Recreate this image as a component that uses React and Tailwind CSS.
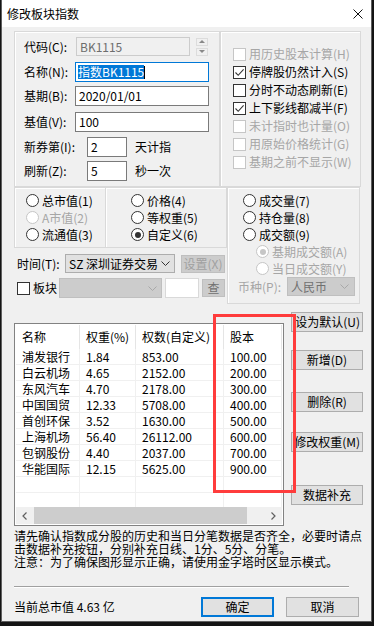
import React from "react";

const rows = [
  ["浦发银行", "1.84", "853.00", "100.00"],
  ["白云机场", "4.65", "2152.00", "200.00"],
  ["东风汽车", "4.70", "2178.00", "300.00"],
  ["中国国贸", "12.33", "5708.00", "400.00"],
  ["首创环保", "3.52", "1630.00", "500.00"],
  ["上海机场", "56.40", "26112.00", "600.00"],
  ["包钢股份", "4.40", "2037.00", "700.00"],
  ["华能国际", "12.15", "5625.00", "900.00"],
  ["", "", "", ""],
  ["", "", "", ""],
];

const colW = ["w-[64px]", "w-[56px]", "w-[88px]", "w-[58px]"];

const Chevron = ({ color = "#333" }) => (
  <svg width="9" height="5" viewBox="0 0 9 5">
    <path d="M0.5 0.5 L4.5 4.5 L8.5 0.5" fill="none" stroke={color} strokeWidth="1" />
  </svg>
);

const Check = ({ checked, disabled, label }) => (
  <div className="flex items-center h-[18px]">
    <span
      className={`w-[13px] h-[13px] border bg-white flex items-center justify-center ${
        disabled ? "border-[#c6c6c6]" : "border-[#333333]"
      }`}
    >
      {checked && (
        <svg width="11" height="11" viewBox="0 0 11 11">
          <path d="M1.5 5.5 L4.2 8.3 L9.6 2.4" fill="none" stroke="#333" strokeWidth="1.1" />
        </svg>
      )}
    </span>
    <span className={`ml-[3px] whitespace-nowrap ${disabled ? "text-[#a6a6a6]" : "text-black"}`}>{label}</span>
  </div>
);

const Radio = ({ on, disabled, label }) => (
  <div className="flex items-center h-[17px]">
    <span
      className={`w-[13px] h-[13px] rounded-full border bg-white flex items-center justify-center ${
        disabled ? "border-[#c6c6c6]" : "border-[#333333]"
      }`}
    >
      {on && <span className={`w-[6px] h-[6px] rounded-full ${disabled ? "bg-[#c6c6c6]" : "bg-[#333333]"}`} />}
    </span>
    <span className={`ml-[3px] whitespace-nowrap ${disabled ? "text-[#a6a6a6]" : "text-black"}`}>{label}</span>
  </div>
);

const Btn = ({ children, className = "" }) => (
  <div
    className={`h-[20px] border border-[#adadad] bg-[#e1e1e1] flex items-center justify-center whitespace-nowrap overflow-hidden ${className}`}
  >
    {children}
  </div>
);

export default function App() {
  return (
    <div className="relative w-[374px] h-[626px] bg-[#141414] overflow-hidden text-[12px] leading-[14px] text-black font-['Noto_Sans_CJK_SC',sans-serif]">
      <div className="ml-[1px] w-[371px] h-[622px] bg-[#f0f0f0] border-l border-r border-b border-[#5f5f5f] flex flex-col">
        {/* title bar */}
        <div className="h-[27px] bg-white flex items-center pl-[5px]">
          <span className="text-[12px]">修改板块指数</span>
          <svg className="ml-auto mr-[8px]" width="10" height="10" viewBox="0 0 10 10">
            <path d="M0.5 0.5 L9.5 9.5 M9.5 0.5 L0.5 9.5" stroke="#111" strokeWidth="1" />
          </svg>
        </div>

        {/* top panels */}
        <div className="mt-[4px] ml-[12px] flex h-[156px]">
          <div className="w-[206px] h-full border border-[#d9d9d9] shadow-[inset_1px_1px_0_#ffffff] pt-[5px] pl-[9px]">
            <div className="flex items-center h-[19px]">
              <span className="w-[52px]">代码(C):</span>
              <div className="w-[114px] h-[19px] border border-[#cccccc] bg-[#f0f0f0] text-[#6d6d6d] pl-[3px] flex items-center">
                BK1115
              </div>
              <div className="ml-[6px] flex flex-col gap-[2px]">
                <div className="w-[12px] h-[8px] border border-[#dcdcdc] bg-[#f0f0f0] flex items-center justify-center">
                  <svg width="6" height="3" viewBox="0 0 6 3"><path d="M0 3 L3 0 L6 3 Z" fill="#888" /></svg>
                </div>
                <div className="w-[12px] h-[8px] border border-[#dcdcdc] bg-[#f0f0f0] flex items-center justify-center">
                  <svg width="6" height="3" viewBox="0 0 6 3"><path d="M0 0 L3 3 L6 0 Z" fill="#888" /></svg>
                </div>
              </div>
            </div>
            <div className="mt-[6px] flex items-center h-[20px]">
              <span className="w-[51px]">名称(N):</span>
              <div className="w-[134px] h-[20px] border border-[#0078d7] bg-white pl-[2px] flex items-center">
                <span className="bg-[#0078d7] text-white">指数BK1115</span>
                <span className="w-[1px] h-[13px] bg-black" />
              </div>
            </div>
            <div className="mt-[4px] flex items-center h-[20px]">
              <span className="w-[51px]">基期(B):</span>
              <div className="w-[134px] h-[20px] border border-[#7a7a7a] bg-white pl-[3px] flex items-center">2020/01/01</div>
            </div>
            <div className="mt-[6px] flex items-center h-[20px]">
              <span className="w-[51px]">基值(V):</span>
              <div className="w-[134px] h-[20px] border border-[#7a7a7a] bg-white pl-[3px] flex items-center">100</div>
            </div>
            <div className="mt-[5px] flex items-center h-[20px]">
              <span className="w-[63px]">新券第(I):</span>
              <div className="w-[40px] h-[20px] border border-[#7a7a7a] bg-white pl-[3px] flex items-center">2</div>
              <span className="ml-[8px]">天计指</span>
            </div>
            <div className="mt-[4px] flex items-center h-[20px]">
              <span className="w-[63px]">刷新(Z):</span>
              <div className="w-[40px] h-[20px] border border-[#7a7a7a] bg-white pl-[3px] flex items-center">5</div>
              <span className="ml-[8px]">秒一次</span>
            </div>
          </div>

          <div className="w-[141px] h-full border border-[#d9d9d9] shadow-[inset_1px_1px_0_#ffffff] pt-[13px] pl-[12px]">
            <Check disabled label="用历史股本计算(H)" />
            <Check checked label="停牌股仍然计入(S)" />
            <Check label="分时不动态刷新(E)" />
            <Check checked label="上下影线都减半(F)" />
            <Check disabled label="未计指时也计量(O)" />
            <Check disabled label="用原始价格统计(G)" />
            <Check disabled label="基期之前不显示(W)" />
          </div>
        </div>

        {/* radio section */}
        <div className="ml-[12px] flex">
          <div className="w-[213px] flex flex-col">
            <div className="flex h-[61px]">
              <div className="w-[92px] h-full border border-[#d9d9d9] shadow-[inset_1px_1px_0_#ffffff] pt-[4px] pl-[11px]">
                <Radio label="总市值(1)" />
                <Radio disabled label="A市值(2)" />
                <Radio label="流通值(3)" />
              </div>
              <div className="w-[121px] h-full border-y border-r border-[#d9d9d9] shadow-[inset_1px_1px_0_#ffffff] pt-[4px] pl-[25px]">
                <Radio label="价格(4)" />
                <Radio label="等权重(5)" />
                <Radio on label="自定义(6)" />
              </div>
            </div>
            <div className="mt-[6px] flex items-center h-[19px] pl-[3px]">
              <span className="w-[48px] whitespace-nowrap">时间(T):</span>
              <div className="w-[110px] h-[19px] border border-[#adadad] bg-[#e1e1e1] flex items-center justify-between pl-[3px] pr-[4px]">
                <span className="whitespace-nowrap">SZ 深圳证券交易</span>
                <Chevron />
              </div>
              <div className="ml-[6px] w-[44px] h-[18px] border border-[#bfbfbf] bg-[#cccccc] text-[#a0a0a0] flex items-center justify-center whitespace-nowrap">
                设置(X)
              </div>
            </div>
            <div className="mt-[5px] flex items-center h-[20px] pl-[3px]">
              <span className="w-[13px] h-[13px] border border-[#333333] bg-white" />
              <span className="ml-[3px]">板块</span>
              <div className="ml-[2px] w-[103px] h-[20px] border border-[#bfbfbf] bg-[#cccccc] flex items-center justify-end pr-[4px]">
                <Chevron color="#a8a8a8" />
              </div>
              <div className="ml-[3px] w-[34px] h-[20px] border border-[#d9d9d9] bg-white" />
              <div className="ml-[3px] w-[23px] h-[18px] border border-[#bfbfbf] bg-[#cccccc] text-[#707070] flex items-center justify-center">
                查
              </div>
            </div>
          </div>

          <div className="w-[133px] h-[117px] border border-[#d9d9d9] shadow-[inset_1px_1px_0_#ffffff] pt-[4px]">
            <div className="pl-[15px]">
              <Radio label="成交量(7)" />
              <Radio label="持仓量(8)" />
              <Radio label="成交额(9)" />
            </div>
            <div className="pl-[28px]">
              <Radio on disabled label="基期成交额(A)" />
              <Radio disabled label="当日成交额(Y)" />
            </div>
            <div className="flex items-center h-[19px] pl-[10px]">
              <span className="w-[49px] text-[#a6a6a6] whitespace-nowrap">币种(P):</span>
              <div className="w-[68px] h-[19px] border border-[#bfbfbf] bg-[#cccccc] text-[#707070] flex items-center justify-between pl-[3px] pr-[5px]">
                <span>人民币</span>
                <Chevron color="#a8a8a8" />
              </div>
            </div>
          </div>
        </div>

        {/* table section */}
        <div className="mt-[8px] ml-[12px] flex">
          <div className="mt-[11px] w-[270px] h-[203px] border border-[#828282] p-[1px] bg-white flex flex-col">
            <div className="flex h-[24px] bg-white shrink-0">
              {["名称", "权重(%)", "权数(自定义)", "股本"].map((h, i) => (
                <div key={i} className={`${colW[i]} h-full border-r border-[#e5e5e5] flex items-center pl-[6px] whitespace-nowrap`}>
                  {h}
                </div>
              ))}
            </div>
            <div className="h-[158px] overflow-hidden">
              {rows.map((r, ri) => (
                <div key={ri} className="flex h-[16px] border-b border-[#f0f0f0]">
                  {r.map((c, ci) => (
                    <div key={ci} className={`${colW[ci]} h-full border-r border-[#f0f0f0] flex items-center pl-[6px] whitespace-nowrap`}>
                      {c}
                    </div>
                  ))}
                </div>
              ))}
            </div>
            <div className="flex h-[17px] bg-[#f0f0f0] shrink-0">
              <div className="w-[17px] h-full flex items-center justify-center">
                <svg width="5" height="8" viewBox="0 0 5 8"><path d="M4.5 0.5 L1 4 L4.5 7.5" fill="none" stroke="#606060" strokeWidth="1.2" /></svg>
              </div>
              <div className="ml-[1px] w-[213px] h-full bg-[#cdcdcd]" />
              <div className="flex-1" />
              <div className="w-[17px] h-full flex items-center justify-center">
                <svg width="5" height="8" viewBox="0 0 5 8"><path d="M0.5 0.5 L4 4 L0.5 7.5" fill="none" stroke="#606060" strokeWidth="1.2" /></svg>
              </div>
            </div>
          </div>

          <div className="ml-[7px] w-[72px] flex flex-col">
            <Btn className="justify-end pr-[2px]">设为默认(U)</Btn>
            <Btn className="mt-[18px]">新增(D)</Btn>
            <Btn className="mt-[22px]">删除(R)</Btn>
            <Btn className="mt-[20px] justify-end pr-[2px]">修改权重(M)</Btn>
            <Btn className="mt-[33px]">数据补充</Btn>
          </div>
        </div>

        {/* notice */}
        <div className="mt-[3px] ml-[12px] leading-[13px] whitespace-nowrap">
          <div>请先确认指数成分股的历史和当日分笔数据是否齐全，必要时请点</div>
          <div>击数据补充按钮，分别补充日线、1分、5分、分笔。</div>
          <div>注意：为了确保图形显示正确，请使用金字塔时区显示模式。</div>
        </div>

        <div className="mt-[18px] ml-[12px] w-[335px] h-[2px] border-t border-[#a0a0a0] border-b border-b-white" />

        <div className="mt-[9px] ml-[12px] flex items-center h-[20px]">
          <span className="w-[187px] whitespace-nowrap">当前总市值 4.63 亿</span>
          <div className="w-[73px] h-[20px] border-2 border-[#0078d7] bg-[#e1e1e1] flex items-center justify-center">确定</div>
          <div className="ml-[12px] w-[73px] h-[20px] border border-[#adadad] bg-[#e1e1e1] flex items-center justify-center">取消</div>
        </div>
      </div>

      {/* red annotation frame */}
      <div className="absolute left-[213px] top-[314px] w-[83px] h-[179px] border-[3px] border-[#ff3c3c]" />
    </div>
  );
}
